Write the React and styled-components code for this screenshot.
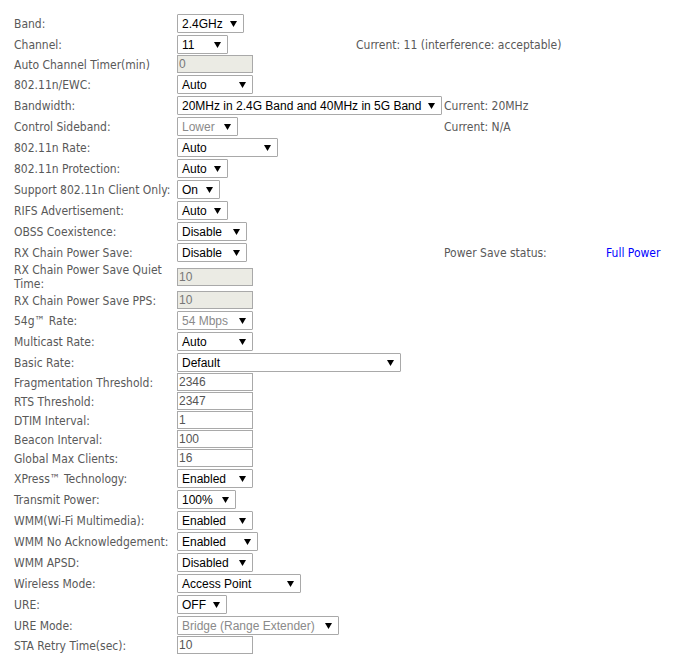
import React from "react";
import styled, { createGlobalStyle } from "styled-components";

const GlobalStyle = createGlobalStyle`
  body {
    margin: 0;
    background: #fff;
  }
`;

const rows = [
  { label: "Band:", select: "2.4GHz", w: 67 },
  {
    label: "Channel:",
    select: "11",
    w: 51,
    span: 1,
    note: "Current: 11 (interference: acceptable)",
  },
  { label: "Auto Channel Timer(min)", input: "0", disabled: true },
  { label: "802.11n/EWC:", select: "Auto", w: 76 },
  {
    label: "Bandwidth:",
    select: "20MHz in 2.4G Band and 40MHz in 5G Band",
    w: 265,
    note: "Current: 20MHz",
  },
  {
    label: "Control Sideband:",
    select: "Lower",
    w: 61,
    disabled: true,
    note: "Current: N/A",
  },
  { label: "802.11n Rate:", select: "Auto", w: 101 },
  { label: "802.11n Protection:", select: "Auto", w: 51 },
  { label: "Support 802.11n Client Only:", select: "On", w: 43 },
  { label: "RIFS Advertisement:", select: "Auto", w: 51 },
  { label: "OBSS Coexistence:", select: "Disable", w: 70 },
  {
    label: "RX Chain Power Save:",
    select: "Disable",
    w: 70,
    note: "Power Save status:",
    status: "Full Power",
  },
  {
    label: ["RX Chain Power Save Quiet", "Time:"],
    input: "10",
    disabled: true,
  },
  { label: "RX Chain Power Save PPS:", input: "10", disabled: true },
  { label: "54g™ Rate:", select: "54 Mbps", w: 76, disabled: true },
  { label: "Multicast Rate:", select: "Auto", w: 76 },
  { label: "Basic Rate:", select: "Default", w: 224 },
  { label: "Fragmentation Threshold:", input: "2346" },
  { label: "RTS Threshold:", input: "2347" },
  { label: "DTIM Interval:", input: "1" },
  { label: "Beacon Interval:", input: "100" },
  { label: "Global Max Clients:", input: "16" },
  { label: "XPress™ Technology:", select: "Enabled", w: 76 },
  { label: "Transmit Power:", select: "100%", w: 59 },
  { label: "WMM(Wi-Fi Multimedia):", select: "Enabled", w: 76 },
  { label: "WMM No Acknowledgement:", select: "Enabled", w: 81 },
  { label: "WMM APSD:", select: "Disabled", w: 76 },
  { label: "Wireless Mode:", select: "Access Point", w: 124 },
  { label: "URE:", select: "OFF", w: 50 },
  {
    label: "URE Mode:",
    select: "Bridge (Range Extender)",
    w: 162,
    disabled: true,
  },
  { label: "STA Retry Time(sec):", input: "10" },
];

function Arrow() {
  return (
    <svg width="7" height="6" viewBox="0 0 7 6">
      <polygon points="0,0 7,0 3.5,6" fill="#000" />
    </svg>
  );
}

export default function App() {
  return (
    <>
      <GlobalStyle />
      <Form>
        {rows.map((r, i) => (
          <Row key={i}>
            <Label>
              {Array.isArray(r.label)
                ? r.label.map((l, j) => (
                    <React.Fragment key={j}>
                      {j > 0 && <br />}
                      {l}
                    </React.Fragment>
                  ))
                : r.label}
            </Label>
            <Control $span={r.span}>
              {r.select !== undefined ? (
                <Select $w={r.w} $disabled={r.disabled}>
                  <span>{r.select}</span>
                  <Arrow />
                </Select>
              ) : (
                <Input
                  defaultValue={r.input}
                  disabled={r.disabled}
                  readOnly
                />
              )}
            </Control>
            {r.note && <Note $wide={r.span === 1}>{r.note}</Note>}
            {r.status && <Status>{r.status}</Status>}
          </Row>
        ))}
      </Form>
    </>
  );
}

const Form = styled.div`
  padding: 13px 14px 6px;
  display: flex;
  flex-direction: column;
  font-family: "DejaVu Sans Condensed", "DejaVu Sans", sans-serif;
  font-stretch: condensed;
  font-size: 12px;
  color: #595959;
`;

const Row = styled.div`
  display: grid;
  grid-template-columns: 163px 179px 88px 162px 1fr;
  align-items: center;
`;

const Label = styled.div`
  grid-column: 1;
  line-height: 14px;
  white-space: nowrap;
`;

const Control = styled.div`
  grid-column: 2 / span ${(p) => p.$span || 2};
  display: flex;
  align-items: center;
`;

const Select = styled.div`
  box-sizing: border-box;
  width: ${(p) => p.$w}px;
  height: 19px;
  margin: 1px 0;
  padding: 0 6px 0 4px;
  border: 1px solid #a9a9a9;
  border-radius: 1px;
  display: flex;
  align-items: center;
  justify-content: space-between;
  white-space: nowrap;
  font-family: "Liberation Sans", Arial, sans-serif;
  font-stretch: normal;
  font-size: 12px;
  color: ${(p) => (p.$disabled ? "#8a8a8a" : "#000")};
  background: #fff;
`;

const Input = styled.input`
  box-sizing: border-box;
  width: 76px;
  height: 18px;
  margin: 0 0 1px;
  padding: 0 1px;
  border: 1px solid #a9a9a9;
  font-family: "Liberation Sans", Arial, sans-serif;
  font-size: 12px;
  color: #555;
  background: #fff;
  outline: none;

  &:disabled {
    background: #ebebe4;
    color: #777;
  }
`;

const Note = styled.div`
  grid-column: ${(p) => (p.$wide ? "3 / span 3" : "4")};
  white-space: nowrap;
  line-height: 14px;
`;

const Status = styled.div`
  grid-column: 5;
  color: #0000ff;
  white-space: nowrap;
  line-height: 14px;
`;
